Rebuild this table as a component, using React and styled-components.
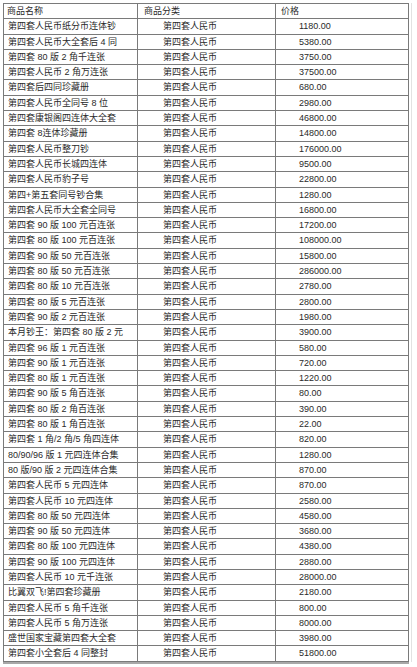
import React from 'react';
import styled, { createGlobalStyle } from 'styled-components';

const rows = [
	['第四套人民币纸分币连体钞', '1180.00'],
	['第四套人民币大全套后 4 同', '5380.00'],
	['第四套 80 版 2 角千连张', '3750.00'],
	['第四套人民币 2 角万连张', '37500.00'],
	['第四套后四同珍藏册', '680.00'],
	['第四套人民币全同号 8 位', '2980.00'],
	['第四套康银阁四连体大全套', '46800.00'],
	['第四套 8连体珍藏册', '14800.00'],
	['第四套人民币整刀钞', '176000.00'],
	['第四套人民币长城四连体', '9500.00'],
	['第四套人民币豹子号', '22800.00'],
	['第四+第五套同号钞合集', '1280.00'],
	['第四套人民币大全套全同号', '16800.00'],
	['第四套 90 版 100 元百连张', '17200.00'],
	['第四套 80 版 100 元百连张', '108000.00'],
	['第四套 90 版 50 元百连张', '15800.00'],
	['第四套 80 版 50 元百连张', '286000.00'],
	['第四套 80 版 10 元百连张', '2780.00'],
	['第四套 80 版 5 元百连张', '2800.00'],
	['第四套 90 版 2 元百连张', '1980.00'],
	['本月钞王：第四套 80 版 2 元', '3900.00'],
	['第四套 96 版 1 元百连张', '580.00'],
	['第四套 90 版 1 元百连张', '720.00'],
	['第四套 80 版 1 元百连张', '1220.00'],
	['第四套 90 版 5 角百连张', '80.00'],
	['第四套 80 版 2 角百连张', '390.00'],
	['第四套 80 版 1 角百连张', '22.00'],
	['第四套 1 角/2 角/5 角四连体', '820.00'],
	['80/90/96 版 1 元四连体合集', '1280.00'],
	['80 版/90 版 2 元四连体合集', '870.00'],
	['第四套人民币 5 元四连体', '870.00'],
	['第四套人民币 10 元四连体', '2580.00'],
	['第四套 80 版 50 元四连体', '4580.00'],
	['第四套 90 版 50 元四连体', '3680.00'],
	['第四套 80 版 100 元四连体', '4380.00'],
	['第四套 90 版 100 元四连体', '2880.00'],
	['第四套人民币 10 元千连张', '28000.00'],
	['比翼双飞!第四套珍藏册', '2180.00'],
	['第四套人民币 5 角千连张', '800.00'],
	['第四套人民币 5 角万连张', '8000.00'],
	['盛世国家宝藏第四套大全套', '3980.00'],
	['第四套小全套后 4 同整封', '51800.00'],
];

const GlobalStyle = createGlobalStyle`
	html, body {
		margin: 0;
		padding: 0;
		background: #fff;
	}
	body {
		font-family: "Liberation Sans", "Noto Sans CJK SC", sans-serif;
	}
`;

const Page = styled.div`
	width: 417px;
	height: 667px;
	padding: 3px 0 0 3px;
	box-sizing: border-box;
	overflow: hidden;
`;

const Frame = styled.div`
	width: 408px;
	border-right: 1px solid #e2e2e2;
`;

const Table = styled.div`
	width: 405px;
	border-top: 1px solid #7a7a7a;
	border-left: 1px solid #7a7a7a;
	box-shadow: 0 2px 0 #a8a8a8;
`;

const Row = styled.div`
	display: grid;
	grid-template-columns: 134px 138px 1fr;
	height: 15.3px;
`;

const Cell = styled.div`
	box-sizing: border-box;
	border-right: 1px solid #7a7a7a;
	border-bottom: 1px solid #7a7a7a;
	padding-left: ${p => p.$indent}px;
	font-size: 9px;
	line-height: 14px;
	color: #2a2a2a;
	white-space: nowrap;
	overflow: hidden;
`;

export default function App() {
	return (
		<Page>
			<GlobalStyle />
			<Frame>
				<Table>
					<Row>
						<Cell $indent={3}>商品名称</Cell>
						<Cell $indent={6}>商品分类</Cell>
						<Cell $indent={5}>价格</Cell>
					</Row>
					{rows.map(([name, price], i) => (
						<Row key={i}>
							<Cell $indent={4}>{name}</Cell>
							<Cell $indent={25}>第四套人民币</Cell>
							<Cell $indent={23}>{price}</Cell>
						</Row>
					))}
				</Table>
			</Frame>
		</Page>
	);
}
